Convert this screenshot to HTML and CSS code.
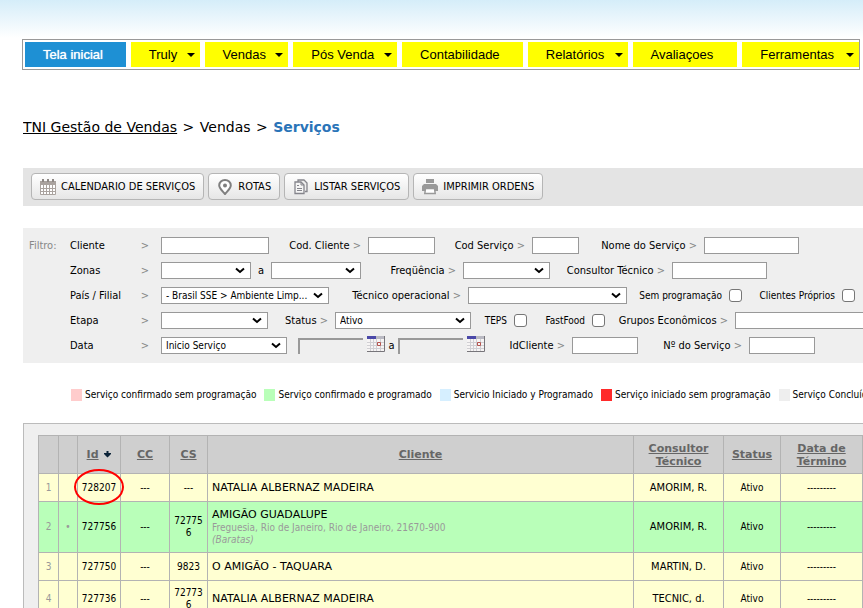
FILE: index.html
```html
<!DOCTYPE html>
<html lang="pt-BR">
<head>
<meta charset="utf-8">
<title>TNI Gestão de Vendas - Serviços</title>
<link rel="stylesheet" href="styles.css">
</head>
<body>
<nav class="menu">
  <a class="menu-item active" href="#">Tela inicial</a>
  <a class="menu-item drop" href="#">Truly</a>
  <a class="menu-item drop" href="#">Vendas</a>
  <a class="menu-item drop" href="#">Pós Venda</a>
  <a class="menu-item" href="#">Contabilidade</a>
  <a class="menu-item drop" href="#">Relatórios</a>
  <a class="menu-item" href="#">Avaliaçoes</a>
  <a class="menu-item drop" href="#">Ferramentas</a>
</nav>
<main class="page">
  <div class="crumbs"><a href="#">TNI Gestão de Vendas</a> <span>&gt;</span> Vendas <span>&gt;</span> <strong>Serviços</strong></div>

  <div class="toolbar">
    <button type="button" class="tool">
      <svg width="16" height="16" viewBox="0 0 16 16"><path fill="#aaa39f" d="M0 2h16v4H0z"/><path fill="#8d8784" d="M2 0h2v3H2zM7 0h2v3H7zM12 0h2v3h-2z"/><path fill="#fff" d="M1 6h14v9H1z"/><path fill="none" stroke="#aaa39f" d="M.5 5v10.500h15V5M3.500 6v10M6.500 6v10M9.500 6v10M12.500 6v10M0 9.500h16M0 12.500h16"/></svg>
      CALENDARIO DE SERVIÇOS</button>
    <button type="button" class="tool">
      <svg width="16" height="16" viewBox="0 0 16 16"><path fill="#fff" stroke="#7f7f7f" stroke-width="2" d="M8 15C5.500 12 2.200 9.500 2.200 6.300a5.800 5.300 0 0 1 11.600 0C13.800 9.500 10.500 12 8 15z"/><circle cx="8" cy="6.500" r="2" fill="#7f7f7f"/></svg>
      ROTAS</button>
    <button type="button" class="tool">
      <svg width="16" height="16" viewBox="0 0 16 16"><path fill="#eee" stroke="#85858c" stroke-width="1.300" d="M5 3V1h6l3 3v8.500h-2"/><path fill="#f5f5f5" stroke="#85858c" stroke-width="1.300" d="M2 3h6l3 3v8.500H2z"/><path fill="none" stroke="#85858c" d="M8 3v3h3M4 6.500h2M4 9.500h5M4 11.500h5"/></svg>
      LISTAR SERVIÇOS</button>
    <button type="button" class="tool">
      <svg width="16" height="16" viewBox="0 0 16 16"><path fill="#999" d="M4 0h8v4H4zM2 5h12l2 2v5h-3v-2H3v2H0V7z"/><path fill="#fff" stroke="#999" stroke-width="1.500" d="M3.500 9.500h9l.7 5h-10.400z"/></svg>
      IMPRIMIR ORDENS</button>
  </div>

  <form class="filters">
    <div class="filter-title">Filtro:</div>
    <div class="filter-rows">
      <div class="row row-client">
        <label class="lead" for="cliente">Cliente <i>&gt;</i></label><input type="text" id="cliente">
        <label for="codcli">Cod. Cliente <i>&gt;</i></label><input type="text" id="codcli">
        <label for="codser">Cod Serviço <i>&gt;</i></label><input type="text" id="codser">
        <label for="nomeser">Nome do Serviço <i>&gt;</i></label><input type="text" id="nomeser">
      </div>
      <div class="row row-zone">
        <label class="lead" for="zona1">Zonas <i>&gt;</i></label><select id="zona1"><option></option></select>
        <label class="mid" for="zona2">a</label><select id="zona2"><option></option></select>
        <label for="freq">Freqüência <i>&gt;</i></label><select id="freq"><option></option></select>
        <label for="consultor">Consultor Técnico <i>&gt;</i></label><input type="text" id="consultor">
      </div>
      <div class="row row-branch">
        <label class="lead" for="filial">País / Filial <i>&gt;</i></label><select id="filial"><option>- Brasil SSE &gt; Ambiente Limp...</option></select>
        <label for="tecnico">Técnico operacional <i>&gt;</i></label><select id="tecnico"><option></option></select>
        <label class="small" for="semprog">Sem programação</label><input type="checkbox" id="semprog">
        <label class="small" for="proprios">Clientes Próprios</label><input type="checkbox" id="proprios">
      </div>
      <div class="row row-stage">
        <label class="lead" for="etapa">Etapa <i>&gt;</i></label><select id="etapa"><option></option></select>
        <label for="status">Status <i>&gt;</i></label><select id="status"><option>Ativo</option></select>
        <label class="small" for="teps">TEPS</label><input type="checkbox" id="teps">
        <label class="small" for="fast">FastFood</label><input type="checkbox" id="fast">
        <label for="grupos">Grupos Econômicos <i>&gt;</i></label><input type="text" id="grupos">
      </div>
      <div class="row row-date">
        <label class="lead" for="data">Data <i>&gt;</i></label><select id="data"><option>Inicio Serviço</option></select>
        <input type="text" class="date" aria-label="Data inicial">
        <button type="button" class="cal" aria-label="Abrir calendário"><svg width="18" height="16" viewBox="0 0 18 16"><path fill="#f6f4f4" d="M0 0h18v16H0z"/><path fill="none" stroke="#d0cfd3" d="M0 6.500h17M0 9.500h17M0 12.500h17M3.500 3v12M6.500 3v12M9.500 3v12M13.500 3v12"/><path fill="#4a48a8" d="M0 0h9v3H0z"/><path fill="#b9b9c2" d="M9 0h9v3H9z"/><path fill="none" stroke="#b5544f" d="M10.500 6.500h3v3h-3z"/><path fill="none" stroke="#77757a" d="M17.500 0v15.500H0"/></svg></button>
        <label class="mid" for="data2">a</label>
        <input type="text" class="date" id="data2">
        <button type="button" class="cal" aria-label="Abrir calendário"><svg width="18" height="16" viewBox="0 0 18 16"><path fill="#f6f4f4" d="M0 0h18v16H0z"/><path fill="none" stroke="#d0cfd3" d="M0 6.500h17M0 9.500h17M0 12.500h17M3.500 3v12M6.500 3v12M9.500 3v12M13.500 3v12"/><path fill="#4a48a8" d="M0 0h9v3H0z"/><path fill="#b9b9c2" d="M9 0h9v3H9z"/><path fill="none" stroke="#b5544f" d="M10.500 6.500h3v3h-3z"/><path fill="none" stroke="#77757a" d="M17.500 0v15.500H0"/></svg></button>
        <label for="idcli">IdCliente <i>&gt;</i></label><input type="text" id="idcli">
        <label for="numser">Nº do Serviço <i>&gt;</i></label><input type="text" id="numser">
      </div>
    </div>
  </form>

  <ul class="legend">
    <li class="pink">Serviço confirmado sem programação</li>
    <li class="green">Serviço confirmado e programado</li>
    <li class="blue">Servicio Iniciado y Programado</li>
    <li class="red">Serviço iniciado sem programação</li>
    <li class="gray">Serviço Concluído</li>
  </ul>

  <div class="results">
    <table>
      <colgroup><col class="c-num"><col class="c-mark"><col class="c-id"><col class="c-cc"><col class="c-cs"><col><col class="c-cons"><col class="c-stat"><col class="c-end"></colgroup>
      <thead>
        <tr><th></th><th></th>
          <th><a href="#">Id</a> <svg class="sort" width="7" height="7" viewBox="0 0 7 7"><path fill="#0b2338" d="M2.500 0h2v2H7v1L3.500 6.500 0 3V2h2.500z"/></svg></th>
          <th><a href="#">CC</a></th><th><a href="#">CS</a></th><th><a href="#">Cliente</a></th>
          <th><a href="#">Consultor Técnico</a></th><th><a href="#">Status</a></th><th><a href="#">Data de Término</a></th></tr>
      </thead>
      <tbody>
        <tr class="r1"><td class="num">1</td><td></td><td class="id"><span class="marked">728207</span></td><td>---</td><td>---</td><td class="client">NATALIA ALBERNAZ MADEIRA</td><td class="cons">AMORIM, R.</td><td>Ativo</td><td>---------</td></tr>
        <tr class="r2 ok"><td class="num">2</td><td class="num">•</td><td class="id">727756</td><td>---</td><td>727756</td><td class="client">AMIGÃO GUADALUPE<small>Freguesia, Rio de Janeiro, Rio de Janeiro, 21670-900</small><small><em>(Baratas)</em></small></td><td class="cons">AMORIM, R.</td><td>Ativo</td><td>---------</td></tr>
        <tr class="r1"><td class="num">3</td><td></td><td class="id">727750</td><td>---</td><td>9823</td><td class="client">O AMIGÃO - TAQUARA</td><td class="cons">MARTIN, D.</td><td>Ativo</td><td>---------</td></tr>
        <tr class="r4"><td class="num">4</td><td></td><td class="id">727736</td><td>---</td><td>727736</td><td class="client">NATALIA ALBERNAZ MADEIRA</td><td class="cons">TECNIC, d.</td><td>Ativo</td><td>---------</td></tr>
      </tbody>
    </table>
  </div>
</main>
</body>
</html>
```
FILE: styles.css
```css
* { box-sizing: border-box; }
html { overflow: hidden; }
body {
  margin: 0;
  padding-top: 39px;
  color: #000;
  background: #fff linear-gradient(#d5edf9, #fff) no-repeat 0 0 / 100% 38px;
  font-family: "DejaVu Sans Condensed", "DejaVu Sans", Tahoma, sans-serif;
  font-size: 11px;
}
button, input, select { font: inherit; color: inherit; margin: 0; }
i { font-style: normal; color: #888; }

/* Menu */
.menu {
  display: grid;
  grid-template-columns: 101fr 69fr 84fr 104fr 121fr 100fr 105fr 117fr;
  gap: 5px;
  margin: 0 3px 0 22px;
  padding: 2px 0 2px 2px;
  height: 31px;
  border: 1px solid #999;
  font-family: "Liberation Sans", Arial, sans-serif;
  font-size: 13px;
}
.menu-item {
  display: flex;
  align-items: center;
  padding-left: 18px;
  background: #ff0;
  color: #000;
  text-decoration: none;
  white-space: nowrap;
}
.menu-item.active { background: #1e90d4; color: #fff; text-shadow: 0 0 1px #fff; }
.drop { justify-content: space-between; padding-right: 5px; }
.drop::after {
  content: "";
  border: 4px solid transparent;
  border-top-color: #000;
  border-bottom: 0;
}

.page { margin-left: 23px; overflow: hidden; }
.crumbs {
  margin-top: 47px;
  line-height: 20px;
  font-family: "DejaVu Sans", Verdana, sans-serif;
  font-size: 14px;
  white-space: nowrap;
}
.crumbs a { color: #000; }
.crumbs span { margin: 0 1px; }
.crumbs strong { color: #2a74b8; }

/* Toolbar */
.toolbar {
  display: flex;
  gap: 4px;
  margin-top: 31px;
  padding: 5px 8px 6px;
  background: #e4e4e4;
}
.tool {
  display: flex;
  align-items: center;
  gap: 5px;
  height: 27px;
  padding: 0 8px;
  border: 1px solid #b5b5b5;
  border-radius: 4px;
  background: linear-gradient(#fff, #e6e6e6);
  white-space: nowrap;
}

/* Filters */
.filters {
  display: flex;
  height: 135px;
  margin-top: 22px;
  padding: 5px 0 0 6px;
  background: #efefef;
  white-space: nowrap;
}
.filter-title { flex: none; width: 41px; line-height: 25px; color: #888; }
.row { display: grid; align-items: center; height: 25px; }
.row-client { grid-template-columns: 91px 108px 99px 67px 97px 47px 125px 95px; }
.row-zone { grid-template-columns: 91px 90px 20px 90px 102px 87px 122px 95px; }
.row-branch { grid-template-columns: 91px 168px 139px 159px 102px 13px 100px 13px; }
.row-stage { grid-template-columns: 91px 107px 67px 136px 43px 13px 65px 13px 130px 150px; }
.row-date { grid-template-columns: 91px 126px 11px 65px 4px 18px 13px 65px 4px 18px 87px 66px 111px 66px; }
.row label { text-align: right; padding-right: 7px; }
.row .lead { display: flex; justify-content: space-between; padding-right: 12px; text-align: left; }
.row .mid { text-align: center; padding: 0; }
.row .small { font-size: 10px; }
.row input[type="text"], .row select {
  width: 100%;
  height: 17px;
  padding: 0 4px;
  border: 1px solid #999;
  border-radius: 0;
  background: #fff;
  font-size: 10px;
}
.row select {
  appearance: none;
  background: #fff url("data:image/svg+xml,%3Csvg xmlns='http://www.w3.org/2000/svg' width='10' height='7'%3E%3Cpath d='M1 1.500l4 3.500 4-3.500' fill='none' stroke='%23000' stroke-width='2'/%3E%3C/svg%3E") no-repeat right 5px center;
}
.row input[type="checkbox"] {
  appearance: none;
  width: 13px;
  height: 13px;
  border: 1px solid #767676;
  border-radius: 3px;
  background: #fff;
}
.row-date .date:nth-child(3) { grid-column: 4; }
.row-date .cal:nth-child(4) { grid-column: 6; }
.row-date .cal:nth-child(7) { grid-column: 9 / 11; justify-self: end; }
.row .date[type="text"] {
  height: 16px;
  border: solid #999;
  border-width: 2px 0 0 2px;
  background: #efefef;
}
.cal { display: block; width: 18px; height: 20px; padding: 0 0 4px; border: 0; background: none; }
.cal svg { display: block; }

/* Legend */
.legend {
  display: flex;
  gap: 8px;
  margin: 24px 0 0;
  padding: 0 0 0 48px;
  line-height: 16px;
  list-style: none;
  font-size: 10px;
  white-space: nowrap;
}
.legend li { display: flex; align-items: center; gap: 3px; }
.legend li::before { content: ""; width: 11px; height: 12px; }
.pink::before { background: #fcc; }
.green::before { background: #b9ffb9; }
.blue::before { background: #d6efff; }
.red::before { background: #ff2a2a; }
.gray::before { background: #eee; }

/* Results */
.results {
  margin-top: 20px;
  padding: 11px 0 11px 14px;
  border: solid #bbb;
  border-width: 1px 0 1px 1px;
  background: #efefef;
}
table { width: 100%; table-layout: fixed; border-collapse: collapse; }
.c-num { width: 20px; }
.c-mark { width: 19px; }
.c-id { width: 43px; }
.c-cc { width: 49px; }
.c-cs { width: 38px; }
.c-cons { width: 90px; }
.c-stat { width: 57px; }
.c-end { width: 82px; }
th, td { padding: 0 4px; border: 1px solid #b3b3b3; text-align: center; }
th {
  height: 38px;
  background: #cfcfcf;
  color: #666;
  font-family: "DejaVu Sans", Verdana, sans-serif;
  font-size: 11px;
  line-height: 13px;
}
th a { color: #666; }
th:nth-child(3) { white-space: nowrap; }
.sort { margin-left: 2px; }
tbody tr { background: #ffffd2; }
tbody .ok { background: #b9ffb9; }
td { font-size: 10px; line-height: 12px; overflow-wrap: anywhere; }
.r1 td { height: 28px; }
.r2 td { height: 51px; }
.r4 td { height: 37px; }
.num { color: #999; }
td.id { padding: 0 2px; white-space: nowrap; }
td.client {
  font-family: "DejaVu Sans", Verdana, sans-serif;
  font-size: 11px;
  line-height: 14px;
  text-align: left;
}
td.cons { font-size: 11px; }
small {
  display: block;
  font-family: "DejaVu Sans Condensed", Tahoma, sans-serif;
  font-size: 10px;
  line-height: 12px;
  color: #999;
}
.marked { position: relative; }
.marked::after {
  content: "";
  position: absolute;
  inset: -13px -8px -12px;
  border: 2px solid #f00;
  border-radius: 50%;
}
```
